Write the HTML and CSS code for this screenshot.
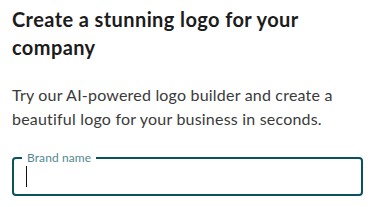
FILE: index.html
```html
<!DOCTYPE html>
<html>
<head>
<meta charset="utf-8">
<link rel="stylesheet" href="styles.css">
</head>
<body>
<main class="card">
  <h1 class="title">Create a stunning logo for your company</h1>
  <p class="lead">Try our AI-powered logo builder and create a beautiful logo for your business in seconds.</p>
  <div class="field">
    <span class="field-label">Brand name</span>
    <span class="caret"></span>
  </div>
</main>
</body>
</html>
```

FILE: styles.css
```css
* { box-sizing: border-box; }
html, body { margin: 0; padding: 0; background: #fff; }
body { font-family: "Lato", "Noto Sans", sans-serif; }
.card { padding: 5px 11px 0 12px; width: 373px; }
.title {
  margin: 0;
  font-size: 20px;
  line-height: 28px;
  font-weight: 700;
  color: #1c1c1c;
  letter-spacing: 0.4px;
}
.lead {
  margin: 22px 0 0 0;
  font-size: 16px;
  line-height: 24px;
  color: #3a3a3a;
  letter-spacing: 0.2px;
}
.field {
  position: relative;
  margin: 26px 0 0 0;
  padding: 0 0 0 12px;
  border: 2px solid #0b5260;
  border-radius: 4px;
  height: 39px;
  width: 351px;
  display: flex;
  align-items: center;
}
.field-label {
  position: absolute;
  top: -8px;
  left: 8px;
  padding: 0 5px;
  background: #fff;
  font-size: 12px;
  line-height: 13px;
  color: #528893;
  letter-spacing: 0.1px;
}
.caret {
  display: block;
  width: 1px;
  height: 21px;
  background: #111;
}
```
